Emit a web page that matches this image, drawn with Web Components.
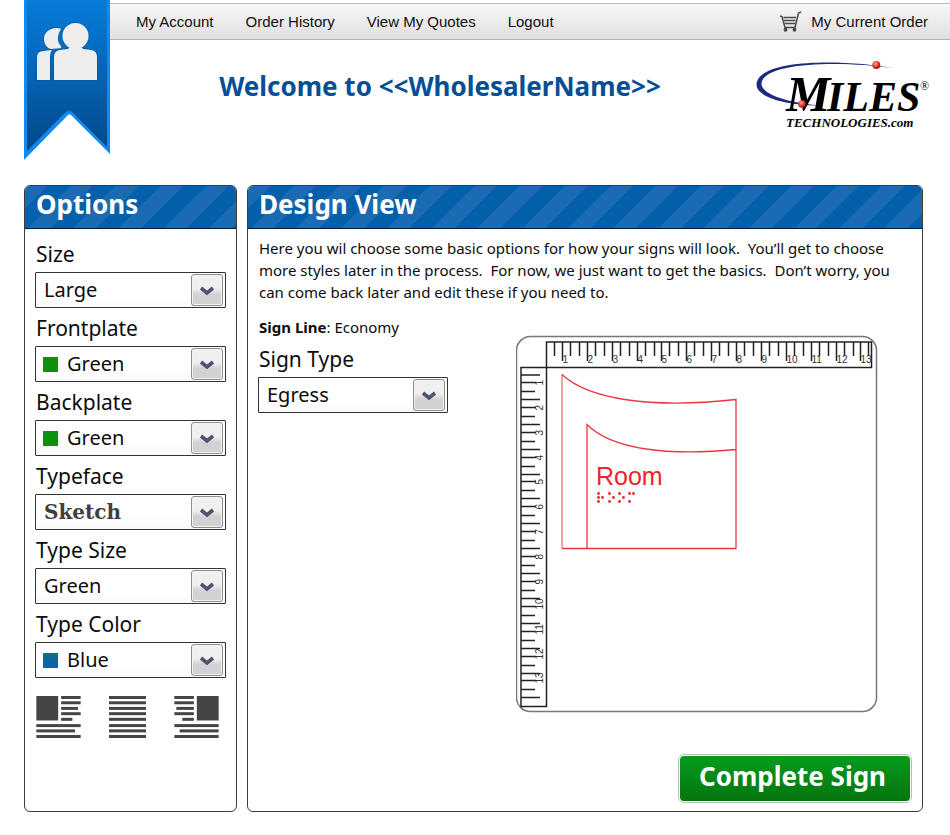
<!DOCTYPE html>
<html lang="en">
<head>
<meta charset="utf-8">
<title>Design View</title>
<style>
  body { margin: 0; background: #fff; color: #0c0c0c; font-family: "Noto Sans", "Open Sans", sans-serif; }
</style>
</head>
<body>
<sign-page></sign-page>

<script>
class Base extends HTMLElement {
  connectedCallback() {
    if (this.shadowRoot) return;
    this.attachShadow({ mode: 'open' }).innerHTML = this.render();
  }
}

customElements.define('account-ribbon', class extends Base {
  render() {
    return `<style>
      :host { display: block; }
      svg { display: block; width: 86px; height: 160px; }
    </style>
    <svg viewBox="0 0 86 160" role="img" aria-label="Account">
      <defs>
        <linearGradient id="b" x1="0" y1="0" x2="0" y2="1"><stop offset="0" stop-color="#067bd8"/><stop offset=".35" stop-color="#056cc0"/><stop offset="1" stop-color="#02488a"/></linearGradient>
        <filter id="s" x="-10%" y="-10%" width="120%" height="120%"><feDropShadow dx="0" dy="0" stdDeviation="1" flood-color="#033a70" flood-opacity=".8"/></filter>
      </defs>
      <path d="M0 0H86V154L47 115Q45.500 113.500 44 115L0 160Z" fill="#0f8af2"/>
      <path d="M3 0H83V147L49 113Q45.500 108.500 42 112L3 151Z" fill="url(#b)"/>
      <g fill="#ededed" filter="url(#s)">
        <path d="M37 29C31 26 20 30 20 39C20 44 23 48 27 49L37 48Q38 47 36 45C33 41 33 35 37 29Z"/>
        <path d="M13 80V57Q13 51 20 51L28 50Q26 52 26 57V80Z"/>
        <circle cx="51.500" cy="36" r="13"/>
        <path d="M46 47H57L59 49L67 50Q73 51 73 57V80H30V57Q30 51 36 50L44 49Z"/>
      </g>
    </svg>`;
  }
});

customElements.define('top-nav', class extends Base {
  render() {
    return `<style>
      :host { display: block; padding-top: 3px; }
      nav { display: flex; align-items: center; gap: 32px; height: 35px; padding: 0 22px 0 26px;
        border-top: 1px solid #bbb; border-bottom: 1px solid #b4b4b4;
        background: linear-gradient(#f8f8f8, #dfdfdf); font: 15px/20px "Liberation Sans", Arial, sans-serif; }
      a { color: #111; text-decoration: none; }
      .order { margin-left: auto; display: flex; align-items: center; gap: 9px; }
      svg { width: 23px; height: 22px; }
    </style>
    <nav aria-label="Main">
      <a href="#account">My Account</a><a href="#history">Order History</a><a href="#quotes">View My Quotes</a><a href="#logout">Logout</a>
      <a class="order" href="#order"><svg viewBox="780 10 23 22" fill="none" stroke="#4a4a4a" stroke-width="1.300" aria-hidden="true">
        <path d="M781 15L783 15.500L786 26.500H796L799.500 12L802 11" stroke-width="1.500"/>
        <path d="M784.500 16.500H797M785 19.500H796.500M785.500 22.500H796"/>
        <circle cx="786.500" cy="28.800" r="1.300" fill="#444"/><circle cx="795.500" cy="28.800" r="1.300" fill="#444"/>
      </svg>My Current Order</a>
    </nav>`;
  }
});

customElements.define('brand-logo', class extends Base {
  render() {
    return `<style>
      :host { display: block; }
      svg { display: block; width: 176px; height: 74px; }
      text { font-family: "Liberation Serif", "Times New Roman", serif; font-weight: 700; font-style: italic; }
    </style>
    <svg viewBox="756 58 176 74" role="img" aria-label="Miles Technologies.com">
      <defs><radialGradient id="r" cx=".4" cy=".35" r=".65"><stop offset="0" stop-color="#ffb09c"/><stop offset=".45" stop-color="#f04a38"/><stop offset="1" stop-color="#a01010"/></radialGradient></defs>
      <path d="M893 68C850 60 757 57 756.500 85C757 98 790 106 822 105.500C795 104 762 96 761.500 84C762 61 845 61 893 68Z" fill="#1b2a80"/>
      <text x="786" y="111" font-size="50">M</text>
      <text x="827" y="111" font-size="42">ILES</text>
      <text x="786" y="127" font-size="13">TECHNOLOGIES.com</text>
      <text x="920" y="90" font-size="12" style="font-weight:400;font-style:normal">®</text>
      <circle cx="876.300" cy="65" r="4" fill="url(#r)"/><circle cx="802" cy="104" r="3.800" fill="url(#r)"/>
    </svg>`;
  }
});

customElements.define('ui-panel', class extends Base {
  render() {
    return `<style>
      :host { display: block; box-sizing: border-box; border: 1px solid #3c3c3c; border-radius: 6px; overflow: hidden; background: #fff; }
      header { height: 42px; border-bottom: 1px solid #0a1c30; padding-left: 11px;
        background: repeating-linear-gradient(135deg, #1b6bb2 0 16px, #0460ab 16px 32px); }
      h2 { margin: 0; font-size: 26px; line-height: 36px; font-weight: 700; color: #fff; }
      .body { padding: 5px 10px 8px; }
    </style>
    <header><h2>${this.getAttribute('heading')}</h2></header>
    <div class="body"><slot></slot></div>`;
  }
});

customElements.define('select-field', class extends Base {
  render() {
    const swatch = this.getAttribute('swatch');
    const value = this.getAttribute('value');
    return `<style>
      :host { display: block; }
      label { display: block; padding: 2px 0 0 1px; font-size: 21px; line-height: 36px; }
      .box { display: grid; align-items: center; }
      .box > * { grid-area: 1 / 1; }
      select { appearance: none; box-sizing: border-box; width: 100%; height: 36px; margin: 0;
        padding: 0 36px 2px ${swatch ? 31 : 8}px; border: 1px solid #333; border-radius: 1px;
        background: linear-gradient(#fff 60%, #fafafa); color: #0c0c0c; font: 20px "Noto Sans", "Open Sans", sans-serif; }
      :host([slab]) select { padding-bottom: 0; font: 700 20px "DejaVu Serif", serif; color: #3f3f3f; }
      .swatch { width: 15px; height: 15px; margin-left: 8px; background: ${swatch || 'none'}; pointer-events: none; z-index: 1; }
      .arrow { justify-self: end; display: grid; place-items: center; box-sizing: border-box; width: 32px; height: 32px; margin-right: 3px;
        border: 1px solid #8e8e8e; border-radius: 3px; box-shadow: inset 0 0 0 1px #f2f2f2;
        background: linear-gradient(#f0f0f0 45%, #d2d2d2 65%); pointer-events: none; z-index: 1; }
      svg { width: 16px; height: 12px; }
    </style>
    <label for="s">${this.getAttribute('label')}</label>
    <div class="box">
      <select id="s"><option>${value}</option></select>
      ${swatch ? '<span class="swatch"></span>' : ''}
      <span class="arrow"><svg viewBox="0 0 16 12" aria-hidden="true"><path d="M2 4L8 9L14 4" fill="none" stroke="#4b566b" stroke-width="3.600"/></svg></span>
    </div>`;
  }
});

customElements.define('align-tools', class extends Base {
  render() {
    const bars = list => list.map(([x, y, w]) => `<rect x="${x}" y="${y}" width="${w}" height="9"/>`).join('');
    const full = [0, 16, 33, 49, 66, 85, 101, 118].map(y => [0, y, 112]);
    return `<style>
      :host { display: flex; gap: 28px; margin-top: 18px; padding-left: 1px; }
      button { padding: 0; border: 0; background: none; }
      svg { display: block; height: 42px; fill: #454545; }
      .wide { width: 45px; } .mid { width: 37px; }
    </style>
    <button type="button" aria-label="Align left"><svg class="wide" viewBox="0 0 134 127"><rect width="66" height="74"/>${bars([[75,0,59],[75,16,59],[75,33,51],[75,49,59],[75,66,34],[0,85,134],[0,101,117],[0,118,134]])}</svg></button>
    <button type="button" aria-label="Justify"><svg class="mid" viewBox="0 0 112 127">${bars(full)}</svg></button>
    <button type="button" aria-label="Align right"><svg class="wide" viewBox="0 0 134 127"><rect x="68" width="66" height="74"/>${bars([[0,0,59],[0,16,59],[6,33,53],[0,49,59],[24,66,35],[0,85,134],[16,101,118],[0,118,134]])}</svg></button>`;
  }
});

customElements.define('sign-canvas', class extends Base {
  render() {
    let ticks = 'M554.500 342V356';
    let nums = '';
    ticks += 'M521 375H540';
    for (let n = 1; n <= 13; n++) {
      const x = Math.round(562 + (n - 1) * 24.87) + .5;
      const y = Math.round(382 + (n - 1) * 24.87) + .5;
      ticks += `M${x} 342V361M${x + 8} 342V356` + (n < 13 ? `M${x + 17} 342V356` : '');
      ticks += `M521 ${y}H536M521 ${y + 9}H535M521 ${y + 17}H540`;
      nums += `<text x="${x}" y="363">${n}</text><text transform="translate(543 ${y + 3}) rotate(-90)">${n}</text>`;
    }
    const dots = [[0,0],[0,4],[0,8],[4,4],[11,0],[11,8],[15,4],[21,0],[21,8],[25,4],[31,0],[31,8],[35,0]]
      .map(([x, y]) => `<circle cx="${598.5 + x}" cy="${493.5 + y}" r="1.400"/>`).join('');
    return `<style>
      :host { display: block; }
      svg { display: block; width: 362px; height: 379px; }
      text { font: 10px "Liberation Sans", Arial, sans-serif; fill: #333; }
      .room { font-size: 25px; fill: #e8262b; }
    </style>
    <svg viewBox="516 335 362 379" role="img" aria-label="Sign preview">
      <rect x="516.500" y="336.500" width="360" height="375" rx="14" fill="#fff" stroke="#777" stroke-width="1.500"/>
      <g fill="none" stroke="#222" stroke-width="1.500">
        <rect x="546.500" y="342" width="325" height="25.500"/><rect x="521" y="367.500" width="25.500" height="339"/>
        <path d="${ticks}"/>
      </g>
      ${nums}
      <g fill="none" stroke="#e8383d" stroke-width="1.300">
        <path d="M562 548V374.500" stroke="#f58a8c" stroke-width="1.600"/>
        <path d="M562 374.500C588 399 650 409 736 399.500V548.500H562M587 548V424.500C612 450 670 456 736 449.500"/>
      </g>
      <text class="room" x="596" y="485">Room</text>
      <g fill="#e8262b">${dots}</g>
    </svg>`;
  }
});

customElements.define('action-button', class extends Base {
  render() {
    return `<style>
      :host { display: block; }
      button { display: block; padding: 1px; border: 1px solid #bcbcbc; border-radius: 6px; background: #fff; }
      span { display: block; padding: 0 24px 5px 19px; border-radius: 4px; background: linear-gradient(#069c1c, #04740f);
        color: #fff; font: 700 26px/40px "Noto Sans", "Open Sans", sans-serif; }
    </style>
    <button type="button"><span><slot></slot></span></button>`;
  }
});

customElements.define('sign-page', class extends Base {
  render() {
    return `<style>
      :host { display: block; }
      .top { display: grid; grid-template-columns: 86px 1fr; grid-template-rows: auto 1fr; padding-left: 24px; }
      account-ribbon { grid-row: 1 / 3; }
      .title { display: flex; align-items: flex-start; padding: 18px 18px 0 14px; }
      h1 { flex: 1; margin: 10px 0 0; text-align: center; font-size: 26px; line-height: 36px; font-weight: 700; color: #064f94; }
      main { display: grid; grid-template-columns: 213px 1fr; gap: 10px; padding: 25px 27px 23px 24px; }
      p { margin: 3px 0 0; padding-left: 1px; font-size: 15px; line-height: 22px; white-space: pre-wrap; }
      .work { display: grid; grid-template-columns: 190px 1fr; margin-top: 13px; }
      .work p { margin: 0; }
      .work select-field { margin-top: 1px; }
      sign-canvas { justify-self: end; margin: 19px 34px 0 0; }
      .actions { display: flex; justify-content: flex-end; margin-top: 40px; }
    </style>
    <div class="top">
      <account-ribbon></account-ribbon>
      <top-nav></top-nav>
      <div class="title"><h1>Welcome to &lt;&lt;WholesalerName&gt;&gt;</h1><brand-logo></brand-logo></div>
    </div>
    <main>
      <ui-panel heading="Options">
        <select-field label="Size" value="Large"></select-field>
        <select-field label="Frontplate" value="Green" swatch="#0a920a"></select-field>
        <select-field label="Backplate" value="Green" swatch="#0a920a"></select-field>
        <select-field label="Typeface" value="Sketch" slab></select-field>
        <select-field label="Type Size" value="Green"></select-field>
        <select-field label="Type Color" value="Blue" swatch="linear-gradient(#08757a, #0a64ac 60%)"></select-field>
        <align-tools></align-tools>
      </ui-panel>
      <ui-panel heading="Design View">
        <p>Here you wil choose some basic options for how your signs will look.  You’ll get to choose more styles later in the process.  For now, we just want to get the basics.  Don’t worry, you can come back later and edit these if you need to.</p>
        <div class="work">
          <div>
            <p><b>Sign Line</b>: Economy</p>
            <select-field label="Sign Type" value="Egress"></select-field>
          </div>
          <sign-canvas></sign-canvas>
        </div>
        <div class="actions"><action-button>Complete Sign</action-button></div>
      </ui-panel>
    </main>`;
  }
});
</script>
</body>
</html>
